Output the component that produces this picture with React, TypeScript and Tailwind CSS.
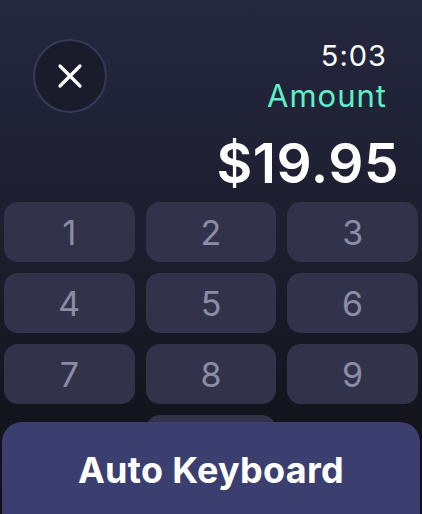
import React from "react";

const keys = ["1", "2", "3", "4", "5", "6", "7", "8", "9"];

export default function App() {
  return (
    <div
      className="relative w-[422px] h-[514px] overflow-hidden bg-gradient-to-b from-[#25273f] via-[#1c1d2d] to-[#0f0f14]"
      style={{ fontFamily: "Inter, 'Noto Sans', sans-serif" }}
    >
      <div className="flex justify-between pl-[33px] pr-[35px] pt-[39px] h-[113px]">
        <div className="w-[74px] h-[74px] rounded-full border-2 border-[#363858] bg-[#1b1c2b] flex items-center justify-center">
          <svg width="28" height="28" viewBox="0 0 28 28" fill="none">
            <path d="M4 4L24 24M24 4L4 24" stroke="white" strokeWidth="3.2" strokeLinecap="round" />
          </svg>
        </div>
        <div className="flex flex-col items-end">
          <div className="text-[29px] leading-[32px] text-white mt-[1px] tracking-[1px]">5:03</div>
          <div className="text-[31px] leading-[36px] text-[#5ef0c9] mt-[6px] tracking-[1px]">Amount</div>
        </div>
      </div>
      <div className="flex justify-end pr-[23px] mt-[18px]">
        <div className="text-[55px] leading-[64px] font-semibold text-white tracking-[0.5px]">$19.95</div>
      </div>
      <div className="grid grid-cols-3 gap-x-[11px] gap-y-[11px] px-[4px] mt-[7px]">
        {keys.map((k) => (
          <div
            key={k}
            className="h-[60px] rounded-[14px] bg-[#32334a] flex items-center justify-center text-[34px] text-[#8b8ca6]"
          >
            {k}
          </div>
        ))}
        <div className="h-[60px]" />
        <div className="h-[60px] rounded-[14px] bg-[#32334a]" />
        <div className="h-[60px]" />
      </div>
      <div className="absolute left-[2px] right-[2px] top-[422px] bottom-0 rounded-t-[20px] bg-[#3b3f70] flex items-start justify-center pt-[27px]">
        <div className="text-[36px] leading-[42px] font-bold text-white tracking-[0.3px]">Auto Keyboard</div>
      </div>
    </div>
  );
}
